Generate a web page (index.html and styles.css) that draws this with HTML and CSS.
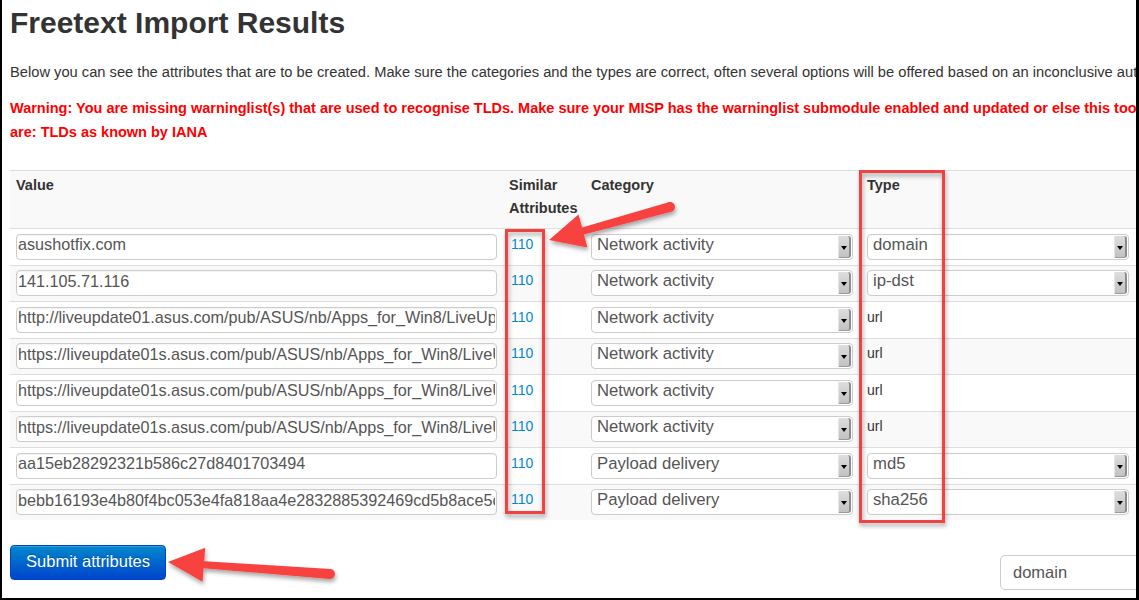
FILE: index.html
```html
<!DOCTYPE html>
<html>
<head>
<meta charset="utf-8">
<title>Freetext Import Results</title>
<link rel="stylesheet" href="styles.css">
</head>
<body>
<div class="frame">
  <div class="page">
    <h2 class="title">Freetext Import Results</h2>
    <p class="intro">Below you can see the attributes that are to be created. Make sure the categories and the types are correct, often several options will be offered based on an inconclusive automatic resolution.</p>
    <p class="warning">Warning: You are missing warninglist(s) that are used to recognise TLDs. Make sure your MISP has the warninglist submodule enabled and updated or else this tool might end up missing valid indicators. The missing lists<br>are: TLDs as known by IANA</p>

    <table class="results">
      <colgroup>
        <col class="c-value"><col class="c-similar"><col class="c-cat"><col class="c-type"><col class="c-rest">
      </colgroup>
      <tr class="head">
        <th>Value</th>
        <th>Similar Attributes</th>
        <th>Category</th>
        <th>Type</th>
        <th></th>
      </tr>
      <tr>
        <td><input class="val" type="text" value="asushotfix.com"></td>
        <td><a class="sim" href="#">110</a></td>
        <td><span class="sel"><select><option>Network activity</option></select></span></td>
        <td><span class="sel"><select><option>domain</option></select></span></td>
        <td></td>
      </tr>
      <tr>
        <td><input class="val" type="text" value="141.105.71.116"></td>
        <td><a class="sim" href="#">110</a></td>
        <td><span class="sel"><select><option>Network activity</option></select></span></td>
        <td><span class="sel"><select><option>ip-dst</option></select></span></td>
        <td></td>
      </tr>
      <tr>
        <td><input class="val" type="text" value="http://liveupdate01.asus.com/pub/ASUS/nb/Apps_for_Win8/LiveUpdate/Liveupdate_Test_VER365.zip"></td>
        <td><a class="sim" href="#">110</a></td>
        <td><span class="sel"><select><option>Network activity</option></select></span></td>
        <td class="plain">url</td>
        <td></td>
      </tr>
      <tr>
        <td><input class="val" type="text" value="https://liveupdate01s.asus.com/pub/ASUS/nb/Apps_for_Win8/LiveUpdate/Liveupdate_Test_VER362.zip"></td>
        <td><a class="sim" href="#">110</a></td>
        <td><span class="sel"><select><option>Network activity</option></select></span></td>
        <td class="plain">url</td>
        <td></td>
      </tr>
      <tr>
        <td><input class="val" type="text" value="https://liveupdate01s.asus.com/pub/ASUS/nb/Apps_for_Win8/LiveUpdate/Liveupdate_Test_VER360.zip"></td>
        <td><a class="sim" href="#">110</a></td>
        <td><span class="sel"><select><option>Network activity</option></select></span></td>
        <td class="plain">url</td>
        <td></td>
      </tr>
      <tr>
        <td><input class="val" type="text" value="https://liveupdate01s.asus.com/pub/ASUS/nb/Apps_for_Win8/LiveUpdate/Liveupdate_Test_VER359.zip"></td>
        <td><a class="sim" href="#">110</a></td>
        <td><span class="sel"><select><option>Network activity</option></select></span></td>
        <td class="plain">url</td>
        <td></td>
      </tr>
      <tr>
        <td><input class="val" type="text" value="aa15eb28292321b586c27d8401703494"></td>
        <td><a class="sim" href="#">110</a></td>
        <td><span class="sel"><select><option>Payload delivery</option></select></span></td>
        <td><span class="sel"><select><option>md5</option></select></span></td>
        <td></td>
      </tr>
      <tr>
        <td><input class="val" type="text" value="bebb16193e4b80f4bc053e4fa818aa4e2832885392469cd5b8ace5cec7e4ca19"></td>
        <td><a class="sim" href="#">110</a></td>
        <td><span class="sel"><select><option>Payload delivery</option></select></span></td>
        <td><span class="sel"><select><option>sha256</option></select></span></td>
        <td></td>
      </tr>
    </table>

    <div class="actions">
      <button class="btn-primary" type="button">Submit attributes</button>
      <div class="other-box">domain</div>
    </div>
  </div>

  <svg class="annot" width="1139" height="600" viewBox="0 0 1139 600">
    <defs>
      <filter id="sh" x="-20%" y="-20%" width="140%" height="140%">
        <feDropShadow dx="1" dy="3" stdDeviation="2" flood-color="#000" flood-opacity="0.35"/>
      </filter>
    </defs>
    <g filter="url(#sh)" fill="none" stroke="#f04343" stroke-width="3">
      <rect x="506.5" y="230.5" width="37" height="282"/>
      <rect x="860.5" y="171.5" width="83" height="350"/>
    </g>
    <g filter="url(#sh)" fill="#f7423f">
      <polygon points="668.7,202.2 582.1,227.6 578.5,214.6 549,240 587.5,247.4 583.9,234.4 671.3,211.8"/>
      <circle cx="670" cy="207" r="5"/>
      <polygon points="330.4,569 204.2,561.2 205.2,547.7 168,562 202.6,581.7 203.6,568.2 329.6,579"/>
      <circle cx="330" cy="574" r="5"/>
    </g>
  </svg>
</div>
</body>
</html>
```

FILE: styles.css
```css
html, body {
  margin: 0;
  padding: 0;
  background: #fff;
}

body {
  font-family: "Liberation Sans", Arial, Helvetica, sans-serif;
  color: #333;
}

.frame {
  position: relative;
  width: 1139px;
  height: 600px;
  box-sizing: border-box;
  border-left: 2px solid #000;
  border-right: 3px solid #000;
  border-bottom: 2px solid #000;
  overflow: hidden;
}

.page {
  width: 1600px;
  padding: 3px 0 0 8px;
}

.title {
  margin: 0;
  font-size: 30px;
  line-height: 40px;
  font-weight: bold;
  color: #333;
}

.intro {
  margin: 17px 0 0;
  font-size: 14.7px;
  line-height: 24px;
  white-space: nowrap;
}

.warning {
  margin: 12px 0 0;
  font-size: 14.5px;
  line-height: 24px;
  font-weight: bold;
  color: #ff0000;
  white-space: nowrap;
}

.results {
  margin-top: 26px;
  width: 1160px;
  table-layout: fixed;
  border-collapse: collapse;
  border-spacing: 0;
}

.c-value { width: 493px; }
.c-similar { width: 82px; }
.c-cat { width: 276px; }
.c-type { width: 276px; }
.c-rest { width: 33px; }

.results th,
.results td {
  border-top: 1px solid #ddd;
  padding: 4.5px 6px 5px;
  text-align: left;
  vertical-align: top;
}

.results .head th {
  padding: 3px 6px 8px;
  font-size: 14.5px;
  line-height: 23px;
  font-weight: bold;
  color: #333;
}

.results tr:nth-child(odd) {
  background: #f9f9f9;
}

.val {
  display: block;
  box-sizing: border-box;
  width: 481px;
  height: 26px;
  margin: 0;
  padding: 0 1px 4px;
  border: 1px solid #ccc;
  border-radius: 4px;
  box-shadow: inset 0 1px 1px rgba(0,0,0,0.05);
  background: #fff;
  font-family: "Liberation Sans", Arial, sans-serif;
  font-size: 16.2px;
  color: #555;
}

.sim {
  display: inline-block;
  margin-left: 2px;
  font-size: 14px;
  line-height: 20px;
  color: #0088cc;
  text-decoration: none;
}

.sel {
  position: relative;
  display: block;
  width: 262px;
  height: 26px;
}

.sel select {
  appearance: none;
  -webkit-appearance: none;
  display: block;
  box-sizing: border-box;
  width: 100%;
  height: 26px;
  margin: 0;
  padding: 0 18px 5px 5px;
  border: 1px solid #ccc;
  border-radius: 4px;
  background: #fff;
  font-family: "Liberation Sans", Arial, sans-serif;
  font-size: 16.7px;
  color: #555;
}

.sel::after {
  content: "";
  position: absolute;
  right: 2px;
  top: 2px;
  bottom: 2px;
  width: 13px;
  box-sizing: border-box;
  background: linear-gradient(#dedede, #c2c2c2);
  border-left: 1px solid #e6e6e6;
  border-right: 2px solid #8c8c8c;
  border-bottom: 1px solid #9a9a9a;
  border-radius: 0 3px 3px 0;
  pointer-events: none;
}

.sel::before {
  content: "";
  position: absolute;
  right: 6px;
  top: 12px;
  width: 0;
  height: 0;
  border-left: 3px solid transparent;
  border-right: 3px solid transparent;
  border-top: 4px solid #000;
  z-index: 1;
  pointer-events: none;
}

.plain {
  font-size: 14px;
  line-height: 20px;
  color: #333;
}

.actions {
  display: flex;
  justify-content: space-between;
  align-items: flex-start;
  width: 1190px;
  margin-top: 25px;
}

.btn-primary {
  box-sizing: border-box;
  width: 156px;
  height: 35px;
  padding: 0 0 3px;
  border: 1px solid #0044cc;
  border-radius: 4px;
  background: linear-gradient(#0088cc, #0044cc);
  color: #fff;
  font-family: "Liberation Sans", Arial, sans-serif;
  font-size: 16.5px;
  text-align: center;
  text-shadow: 0 -1px 0 rgba(0,0,0,0.25);
  box-shadow: inset 0 1px 0 rgba(255,255,255,0.2);
}

.other-box {
  box-sizing: border-box;
  width: 200px;
  height: 35px;
  margin-top: 10px;
  padding: 0 12px;
  border: 1px solid #ccc;
  border-radius: 5px;
  font-size: 16.5px;
  line-height: 32px;
  color: #555;
}

.annot {
  position: absolute;
  left: -2px;
  top: 0;
  pointer-events: none;
}
```
